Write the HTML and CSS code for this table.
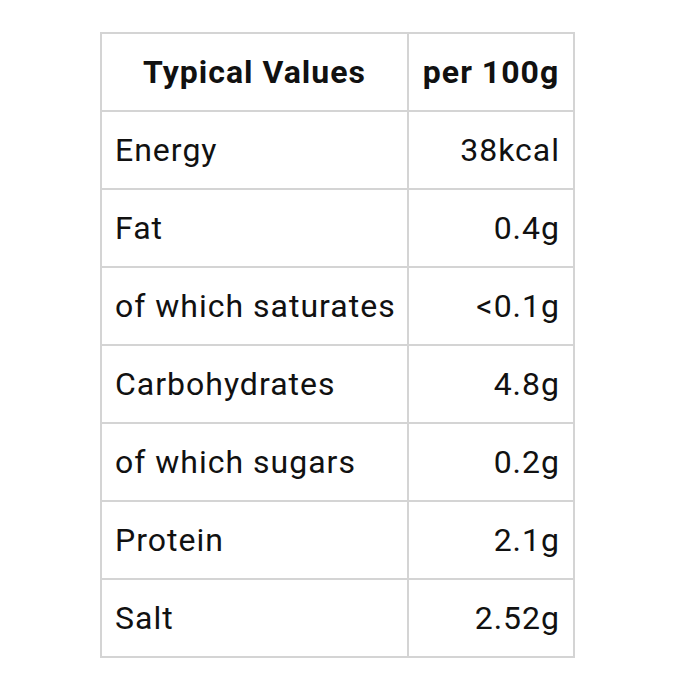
FILE: index.html
```html
<!DOCTYPE html>
<html>
<head>
<meta charset="utf-8">
<link rel="stylesheet" href="styles.css">
</head>
<body>
<table class="nutrition">
  <colgroup><col class="c-name"><col class="c-val"></colgroup>
  <thead>
    <tr><th>Typical Values</th><th>per 100g</th></tr>
  </thead>
  <tbody>
    <tr><td>Energy</td><td class="num">38kcal</td></tr>
    <tr><td>Fat</td><td class="num">0.4g</td></tr>
    <tr><td>of which saturates</td><td class="num">&lt;0.1g</td></tr>
    <tr><td>Carbohydrates</td><td class="num">4.8g</td></tr>
    <tr><td>of which sugars</td><td class="num">0.2g</td></tr>
    <tr><td>Protein</td><td class="num">2.1g</td></tr>
    <tr><td>Salt</td><td class="num">2.52g</td></tr>
  </tbody>
</table>
</body>
</html>
```
FILE: styles.css
```css
html, body {
  margin: 0;
  background: #fff;
}
body {
  padding: 32px 0 0 100px;
  font-family: Roboto, "Liberation Sans", sans-serif;
  color: #111;
}
.nutrition {
  border-collapse: collapse;
  table-layout: fixed;
  width: 473px;
  font-size: 32px;
  letter-spacing: 1px;
}
.c-name { width: 307px; }
.c-val { width: 166px; }
.nutrition th,
.nutrition td {
  border: 2px solid #d4d4d4;
  height: 78px;
  padding: 0 13px 0 13px;
  vertical-align: middle;
  white-space: nowrap;
  box-sizing: border-box;
}
.nutrition th {
  font-weight: 700;
  text-align: center;
}
.nutrition td {
  font-weight: 400;
  text-align: left;
}
.nutrition td.num {
  text-align: right;
}
```
